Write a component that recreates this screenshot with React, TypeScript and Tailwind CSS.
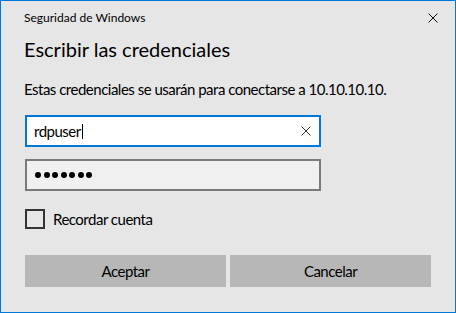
import React from "react";

const font = { fontFamily: 'Lato, "Noto Sans", sans-serif' };

function XIcon({ color = "#000" }: { color?: string }) {
  return (
    <svg width="10" height="10" viewBox="0 0 10 10" className="block">
      <path d="M0.5 0.5 L9.5 9.5 M9.5 0.5 L0.5 9.5" stroke={color} strokeWidth="1" fill="none" />
    </svg>
  );
}

export default function App() {
  return (
    <div
      className="w-[456px] h-[313px] border border-[#0078d7] bg-[#e6e6e6] text-black flex flex-col"
      style={font}
    >
      <div className="flex items-start justify-between pl-[23px] pr-[17px] pt-[9px] h-[30px]">
        <span className="text-[12px] leading-[16px]">Seguridad de Windows</span>
        <div className="mt-[3px]">
          <XIcon color="#111" />
        </div>
      </div>
      <div className="px-[23px] flex flex-col">
        <div className="text-[20px] leading-[28px] mt-[4px]">Escribir las credenciales</div>
        <div className="text-[15px] leading-[20px] mt-[16px] tracking-[-0.5px]">
          Estas credenciales se usarán para conectarse a 10.10.10.10.
        </div>
        <div className="mt-[16px] ml-[1px] w-[296px] h-[32px] border-2 border-[#0078d7] bg-white flex items-center pl-[7px] pr-[8px]">
          <span className="text-[15px] leading-[20px] tracking-[-0.5px]">rdpuser</span>
          <span className="w-[1px] h-[15px] bg-black ml-[1px]" />
          <div className="flex-1" />
          <XIcon color="#333" />
        </div>
        <div className="mt-[12px] ml-[1px] w-[296px] h-[32px] border-2 border-[#7a7a7a] bg-[#f0f0f0] flex items-center pl-[8px] gap-[2.5px]">
          {[0, 1, 2, 3, 4, 5, 6].map((i) => (
            <span key={i} className="w-[6px] h-[6px] rounded-full bg-black" />
          ))}
        </div>
        <div className="mt-[18px] ml-[1px] flex items-center">
          <span className="w-[20px] h-[20px] border-2 border-[#333333]" />
          <span className="ml-[8px] text-[15px] leading-[20px] tracking-[-0.5px]">Recordar cuenta</span>
        </div>
        <div className="mt-[26px] ml-[1px] flex gap-[4px]">
          <div className="w-[201px] h-[32px] bg-[#b7b7b7] flex items-center justify-center text-[15px] tracking-[-0.5px]">
            Aceptar
          </div>
          <div className="w-[201px] h-[32px] bg-[#b7b7b7] flex items-center justify-center text-[15px] tracking-[-0.5px]">
            Cancelar
          </div>
        </div>
      </div>
    </div>
  );
}
